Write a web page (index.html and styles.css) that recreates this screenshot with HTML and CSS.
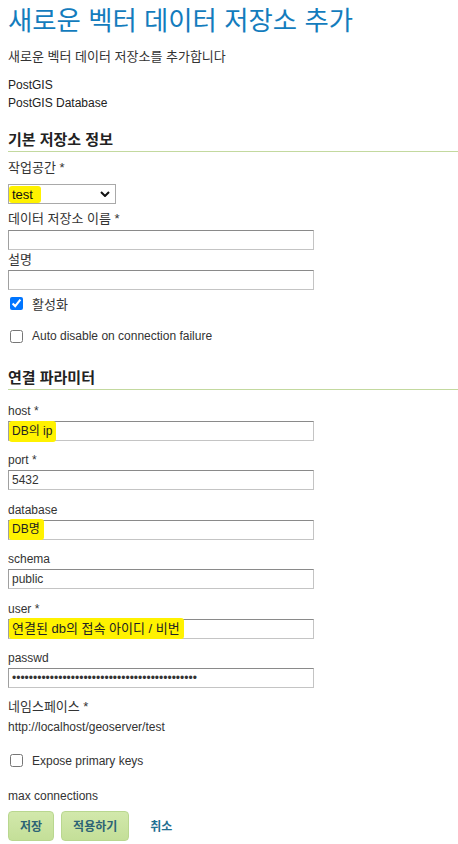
FILE: index.html
```html
<!DOCTYPE html>
<html lang="ko">
<head>
<meta charset="utf-8">
<title>새로운 벡터 데이터 저장소 추가</title>
<link rel="stylesheet" href="styles.css">
</head>
<body>
<div class="page">
  <h1 class="title">새로운 벡터 데이터 저장소 추가</h1>
  <p class="desc ko">새로운 벡터 데이터 저장소를 추가합니다</p>
  <div class="store-type">
    <div>PostGIS</div>
    <div>PostGIS Database</div>
  </div>

  <h2 class="section-head">기본 저장소 정보</h2>
  <div class="basic">
    <label class="lbl ko">작업공간 *</label>
    <div class="select-box"><span class="mark">test</span><svg class="chev" viewBox="0 0 10 6" width="10" height="6"><path d="M1 1 L5 5 L9 1" fill="none" stroke="#111" stroke-width="2"/></svg></div>
    <label class="lbl ko lbl-name">데이터 저장소 이름 *</label>
    <input class="field" type="text">
    <label class="lbl ko lbl-desc">설명</label>
    <input class="field" type="text">
    <div class="check-row first"><input type="checkbox" checked><span class="ko">활성화</span></div>
    <div class="check-row"><input type="checkbox"><span>Auto disable on connection failure</span></div>
  </div>

  <h2 class="section-head second">연결 파라미터</h2>
  <ul class="params">
    <li><label class="lbl">host *</label><div class="field fake"><span class="mark">DB의 ip</span></div></li>
    <li><label class="lbl">port *</label><input class="field" type="text" value="5432"></li>
    <li><label class="lbl">database</label><div class="field fake"><span class="mark">DB명</span></div></li>
    <li><label class="lbl">schema</label><input class="field" type="text" value="public"></li>
    <li><label class="lbl">user *</label><div class="field fake"><span class="mark ko">연결된 db의 접속 아이디 / 비번</span></div></li>
    <li><label class="lbl">passwd</label><input class="field" type="password" value="12345678901234567890123456789012345678901234"></li>
  </ul>
  <div class="ns">
    <div class="ns-line ko">네임스페이스 *</div>
    <div class="ns-line">http://localhost/geoserver/test</div>
  </div>
  <div class="check-row expose"><input type="checkbox"><span>Expose primary keys</span></div>
  <div class="lbl maxconn">max connections</div>
  <div class="buttons">
    <button class="btn">저장</button>
    <button class="btn">적용하기</button>
    <a class="cancel">취소</a>
  </div>
</div>
</body>
</html>
```
FILE: styles.css
```css
html, body {
  margin: 0;
  padding: 0;
  background: #fff;
}
body {
  font-family: "Liberation Sans", "Noto Sans CJK KR", sans-serif;
  font-size: 12px;
  color: #222;
}
.page {
  padding: 0 0 0 8px;
}
.ko {
  font-size: 13px;
}
.title {
  margin: 0;
  padding-top: 4px;
  font-size: 26.4px;
  line-height: 34px;
  font-weight: normal;
  color: #137cbd;
}
.desc {
  margin: 10px 0 0;
  line-height: 18px;
  color: #333;
}
.store-type {
  margin-top: 10px;
  line-height: 18px;
  color: #222;
}
.section-head {
  margin: 18px 0 0;
  font-size: 15px;
  line-height: 20px;
  font-weight: bold;
  color: #222;
  border-bottom: 1px solid #c3d99f;
  padding-bottom: 1px;
}
.section-head.second {
  margin-top: 23px;
}
.lbl {
  display: block;
  line-height: 18px;
  color: #333;
}
.basic {
  padding-top: 7px;
}
.select-box {
  margin-top: 7px;
  width: 106px;
  height: 18px;
  border: 1px solid #a9a9a9;
  display: flex;
  align-items: center;
  justify-content: space-between;
}
.select-box .mark {
  padding: 1px 8px 1px 3px;
  font-size: 13px;
  line-height: 15px;
  color: #111;
}
.chev {
  margin-right: 5px;
}
.basic .lbl-name {
  margin-top: 6px;
}
.basic .lbl-desc {
  margin-top: 1px;
}
.field {
  display: block;
  box-sizing: border-box;
  width: 306px;
  height: 20px;
  margin: 1px 0 0;
  padding: 0 3px;
  border: 1px solid #c4c4c4;
  border-top-color: #8a8a8a;
  border-left-color: #a0a0a0;
  font-family: "Liberation Sans", "Noto Sans CJK KR", sans-serif;
  font-size: 12px;
  color: #333;
  background: #fff;
  outline: none;
}
.lbl-name + .field {
  margin-top: 2px;
}
.field.fake {
  display: flex;
  align-items: center;
  padding: 0;
}
.mark {
  background: #fff200;
  border-radius: 3px;
}
.field .mark {
  padding: 2px 4px 2px 3px;
  line-height: 17px;
  color: #222;
}
.field .mark.ko {
  font-size: 13px;
}
.check-row {
  display: flex;
  align-items: center;
  height: 18px;
}
.check-row input {
  margin: 0 9px 0 2px;
  width: 13px;
  height: 13px;
}
.check-row span {
  color: #333;
}
.check-row.first {
  margin-top: 4px;
}
.basic .check-row + .check-row {
  margin-top: 15px;
}
.params {
  list-style: none;
  margin: 12px 0 0;
  padding: 0;
}
.params li {
  margin-bottom: 10.4px;
}
.params li:last-child {
  margin-bottom: 8px;
}
.ns-line {
  line-height: 21px;
  color: #333;
}
.ns {
  margin-bottom: 14px;
}
.expose {
  margin-bottom: 17px;
}
.maxconn {
  margin-bottom: 6px;
}
.buttons {
  display: flex;
  align-items: center;
  gap: 7px;
}
.btn {
  height: 30px;
  padding: 0 11px;
  border: 1px solid #b9d78f;
  border-radius: 4px;
  background: linear-gradient(#d2e8ab, #c4df98);
  font-family: "Liberation Sans", "Noto Sans CJK KR", sans-serif;
  font-size: 12px;
  font-weight: bold;
  color: #2d6375;
}
.cancel {
  margin-left: 14px;
  font-weight: bold;
  color: #1f6e91;
}
```
